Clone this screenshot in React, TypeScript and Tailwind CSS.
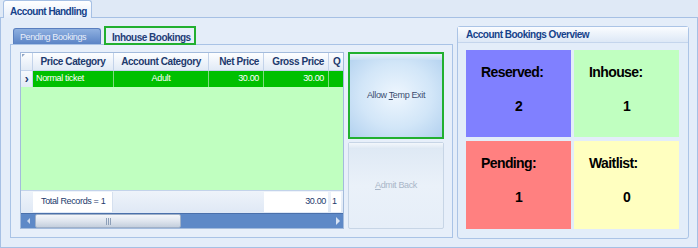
export default function App() {
  const tiles = [
    { label: "Reserved:", value: "2", bg: "bg-[#8080ff]" },
    { label: "Inhouse:", value: "1", bg: "bg-[#c0ffc0]" },
    { label: "Pending:", value: "1", bg: "bg-[#ff8080]" },
    { label: "Waitlist:", value: "0", bg: "bg-[#ffffc0]" },
  ];

  return (
    <div className="w-[698px] h-[248px] overflow-hidden bg-[#dfe9f6] font-['Liberation_Sans',Arial,sans-serif] text-[11px] whitespace-nowrap">
      {/* top tab */}
      <div className="h-[17px] flex">
        <div className="ml-[3px] w-[89px] h-[18px] border border-b-0 border-[#a6c0e4] rounded-t-[3px] bg-gradient-to-b from-[#ffffff] to-[#e6eefa] pl-[6px] pt-[3px] font-bold text-[10px] text-[#15428b] tracking-[-0.55px] relative z-10">
          Account Handling
        </div>
      </div>

      {/* main panel */}
      <div className="h-[231px] border border-[#a6c0e4] bg-[#e4edf9] flex items-start pl-[8px] pt-[9px]">
        {/* tab control */}
        <div className="w-[444px] flex flex-col">
          <div className="h-[17px] flex items-end pl-[4px] gap-[3px]">
            <div className="w-[88px] h-[16px] rounded-t-[3px] bg-gradient-to-b from-[#8fb0e0] to-[#5b84c6] border border-b-0 border-[#5a7fbf] text-[#e8eefa] text-[9px] tracking-[-0.4px] pl-[6px] pt-[2px]">
              Pending Bookings
            </div>
            <div className="w-[92px] h-[19px] -mb-[1px] relative z-10 border-2 border-[#22b030] bg-[#e7effa] text-[#1f3d78] font-bold text-[10px] tracking-[-0.5px] pl-[6px] pt-[2px]">
              Inhouse Bookings
            </div>
          </div>
          <div className="ml-[1px] h-[194px] border border-[#a9c3e6] bg-[#e7effa] flex gap-[4px] pl-[9px] pt-[7px]">
            {/* grid */}
            <div className="w-[324px] h-[177px] border border-[#a3bbdc] bg-[#c0ffc0] flex flex-col">
              {/* header */}
              <div className="h-[18px] flex bg-gradient-to-b from-[#fdfeff] to-[#e1eaf6] border-b border-[#c3d3ea] font-bold text-[#1d3a6d] text-[10px] tracking-[-0.4px] overflow-hidden">
                <div className="w-[12px] shrink-0 border-r border-[#c3d3ea] relative">
                  <div className="absolute left-[1px] top-[1px] w-0 h-0 border-t-[3px] border-r-[3px] border-t-[#8ea4c4] border-r-transparent" />
                </div>
                <div className="w-[81px] shrink-0 border-r border-[#c3d3ea] flex items-center justify-center">Price Category</div>
                <div className="w-[95px] shrink-0 border-r border-[#c3d3ea] flex items-center justify-center">Account Category</div>
                <div className="w-[55px] shrink-0 border-r border-[#c3d3ea] flex items-center justify-end pr-[4px]">Net Price</div>
                <div className="w-[65px] shrink-0 border-r border-[#c3d3ea] flex items-center justify-end pr-[4px]">Gross Price</div>
                <div className="w-[20px] shrink-0 flex items-center pl-[4px]">Q</div>
              </div>
              {/* row */}
              <div className="h-[16px] flex text-[9px] tracking-[-0.35px] overflow-hidden">
                <div className="w-[12px] shrink-0 bg-gradient-to-b from-[#f6f9fd] to-[#e2eaf6] border-r border-[#c3d3ea] flex items-center justify-center text-[#1d3a6d] font-bold text-[12px] leading-none">›</div>
                <div className="flex bg-[#00c000] text-white flex-1">
                  <div className="w-[81px] shrink-0 border-r border-[#7fdc7f] flex items-center pl-[3px]">Normal ticket</div>
                  <div className="w-[95px] shrink-0 border-r border-[#7fdc7f] flex items-center justify-center">Adult</div>
                  <div className="w-[55px] shrink-0 border-r border-[#7fdc7f] flex items-center justify-end pr-[4px]">30.00</div>
                  <div className="w-[65px] shrink-0 border-r border-[#7fdc7f] flex items-center justify-end pr-[4px]">30.00</div>
                  <div className="flex-1" />
                </div>
              </div>
              <div className="flex-1 bg-[#c0ffc0]" />
              {/* footer */}
              <div className="h-[23px] flex items-center bg-gradient-to-b from-[#eef3fa] to-[#dfe8f5] border-t border-[#c3d3ea] text-[#1d3a6d] text-[9px] tracking-[-0.35px]">
                <div className="w-[12px] shrink-0" />
                <div className="w-[80px] h-[20px] bg-white flex items-center pl-[8px] shrink-0 border-r border-[#d5e0ef]">Total Records = 1</div>
                <div className="w-[151px] shrink-0" />
                <div className="w-[64px] h-[20px] bg-white flex items-center justify-end pr-[2px] shrink-0">30.00</div>
                <div className="w-[3px] shrink-0" />
                <div className="w-[10px] h-[20px] bg-white flex items-center pl-[1px] shrink-0">1</div>
              </div>
              {/* scrollbar */}
              <div className="h-[15px] flex bg-[#5e89c7] border-t border-[#4a70ab]">
                <div className="w-[14px] flex items-center justify-center">
                  <div className="w-0 h-0 border-y-[3px] border-y-transparent border-r-[3px] border-r-[#c9d8ee]" />
                </div>
                <div className="w-[146px] h-full rounded-[2px] bg-gradient-to-b from-[#f4f6fa] via-[#dfe5ee] to-[#c4cfdd] border border-[#9fb0c8] flex items-center justify-center gap-[1px]">
                  <div className="w-[1px] h-[7px] bg-[#8d9fb8]" />
                  <div className="w-[1px] h-[7px] bg-[#8d9fb8]" />
                  <div className="w-[1px] h-[7px] bg-[#8d9fb8]" />
                </div>
                <div className="flex-1" />
                <div className="w-[10px] flex items-center justify-center">
                  <div className="w-0 h-0 border-y-[4px] border-y-transparent border-l-[4px] border-l-[#d7e3f4]" />
                </div>
              </div>
            </div>
            {/* buttons */}
            <div className="w-[96px] flex flex-col gap-[3px]">
              <div className="h-[87px] border-2 border-[#22b030] bg-[radial-gradient(ellipse_at_center,#eef6fe_0%,#d2e6f8_55%,#b2d1ef_100%)] relative flex items-center justify-center text-[#3b4d70] text-[9px] tracking-[-0.35px]">
                <div className="absolute left-0 right-0 top-0 h-[6px] bg-gradient-to-b from-[#e9f2fb] to-[#c9def3]" />
                <span>Allow <span className="underline">T</span>emp Exit</span>
              </div>
              <div className="h-[87px] border border-[#c7d5e6] rounded-[2px] bg-gradient-to-b from-[#dde8f4] via-[#eaf1f9] to-[#e6eef8] relative flex items-center justify-center text-[#a9b6c8] text-[9px] tracking-[-0.35px]">
                <div className="absolute left-0 right-0 top-0 h-[6px] bg-gradient-to-b from-[#f3f7fc] to-[#dce7f3]" />
                <span><span className="underline">A</span>dmit Back</span>
              </div>
            </div>
          </div>
        </div>

        {/* group box */}
        <div className="ml-[4px] -mt-[1px] w-[232px] h-[213px] border border-[#abc4e6] rounded-[3px] bg-[#e3edf9] flex flex-col">
          <div className="h-[16px] bg-gradient-to-b from-[#fafcff] to-[#dde8f6] border-b border-[#c4d5ec] pl-[8px] flex items-center font-bold text-[#15428b] text-[10px] tracking-[-0.5px]">
            Account Bookings Overview
          </div>
          <div className="grid grid-cols-[105px_105px] gap-x-[3px] gap-y-[4px] pl-[8px] pt-[7px]">
            {tiles.map((t, i) => (
              <div key={t.label} className={`${t.bg} ${i < 2 ? "h-[87px]" : "h-[88px]"} flex flex-col font-bold text-black text-[14px] tracking-[-0.6px]`}>
                <div className="pl-[15px] pt-[13px] leading-[18px]">{t.label}</div>
                <div className="text-center pt-[16px] leading-[18px]">{t.value}</div>
              </div>
            ))}
          </div>
        </div>
      </div>
    </div>
  );
}
